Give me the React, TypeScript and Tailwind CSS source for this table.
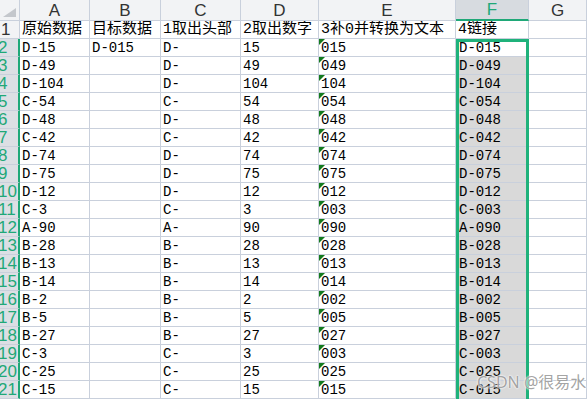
import React from "react";

const rows: string[][] = [
  ["D-15", "D-015", "D-", "15", "015", "D-015"],
  ["D-49", "", "D-", "49", "049", "D-049"],
  ["D-104", "", "D-", "104", "104", "D-104"],
  ["C-54", "", "C-", "54", "054", "C-054"],
  ["D-48", "", "D-", "48", "048", "D-048"],
  ["C-42", "", "C-", "42", "042", "C-042"],
  ["D-74", "", "D-", "74", "074", "D-074"],
  ["D-75", "", "D-", "75", "075", "D-075"],
  ["D-12", "", "D-", "12", "012", "D-012"],
  ["C-3", "", "C-", "3", "003", "C-003"],
  ["A-90", "", "A-", "90", "090", "A-090"],
  ["B-28", "", "B-", "28", "028", "B-028"],
  ["B-13", "", "B-", "13", "013", "B-013"],
  ["B-14", "", "B-", "14", "014", "B-014"],
  ["B-2", "", "B-", "2", "002", "B-002"],
  ["B-5", "", "B-", "5", "005", "B-005"],
  ["B-27", "", "B-", "27", "027", "B-027"],
  ["C-3", "", "C-", "3", "003", "C-003"],
  ["C-25", "", "C-", "25", "025", "C-025"],
  ["C-15", "", "C-", "15", "015", "C-015"],
];

const titles = ["原始数据", "目标数据", "1取出头部", "2取出数字", "3补0并转换为文本", "4链接"];
const letters = ["A", "B", "C", "D", "E", "F", "G"];

const cell = "border-r border-b border-[#c9d0dc] overflow-hidden whitespace-nowrap flex items-center pl-[2px] pt-[1px] text-black";

const App = () => {
  return (
    <div
      className="relative w-[587px] h-[399px] overflow-hidden bg-white text-[14px]"
      style={{ fontFamily: '"Liberation Mono", "Noto Sans CJK SC", monospace' }}
    >
      <div className="grid grid-cols-[20px_70px_71px_80px_78px_137px_73px_1fr] grid-rows-[21px_repeat(21,18px)]">
        {/* corner */}
        <div className="relative bg-[#f2f3f5] border-r border-b border-[#c9d0dc]">
          <div className="absolute right-[3px] bottom-[3px] w-0 h-0 border-b-[9px] border-l-[13px] border-b-[#c4c7cc] border-l-transparent" />
        </div>
        {letters.map((l) => (
          <div
            key={l}
            className={
              l === "F"
                ? "flex items-center justify-center pt-[1px] bg-[#d7dbe0] border-r border-[#c9d0dc] border-b-2 border-b-[#1fa878] text-[#1fa878] text-[17px] font-['Liberation_Sans',sans-serif]"
                : "flex items-center justify-center pt-[1px] bg-[#f2f3f5] border-r border-b border-[#c9d0dc] text-[#333] text-[17px] font-['Liberation_Sans',sans-serif]"
            }
          >
            {l}
          </div>
        ))}

        {/* row 1 */}
        <div className="bg-[#f2f3f5] border-r border-b border-[#c9d0dc] overflow-hidden text-[17px] leading-none flex items-center text-[#333] font-['Liberation_Sans',sans-serif]">
          <span className="ml-[1px]">1</span>
        </div>
        {titles.map((t, i) => (
          <div key={i} className={`${cell} text-[15px]`}>
            {t}
          </div>
        ))}
        <div className={cell} />

        {rows.map((r, i) => (
          <React.Fragment key={i}>
            <div className="bg-[#dcdfe4] border-r-2 border-r-[#1fa878] border-b border-b-[#c9d0dc] overflow-hidden text-[17px] leading-none flex items-center text-[#1fa878] font-['Liberation_Sans',sans-serif]">
              <span className="ml-[-2px]">{i + 2}</span>
            </div>
            <div className={cell}>{r[0]}</div>
            <div className={cell}>{r[1]}</div>
            <div className={cell}>{r[2]}</div>
            <div className={cell}>{r[3]}</div>
            <div className={`relative ${cell}`}>
              <span className="absolute left-0 top-0 w-0 h-0 border-t-[6px] border-r-[6px] border-t-[#137a1e] border-r-transparent" />
              {r[4]}
            </div>
            <div className={`${cell} ${i === 0 ? "bg-white" : "bg-[#d9d9d9]"} pl-[3px]`}>{r[5]}</div>
            <div className={cell} />
          </React.Fragment>
        ))}
      </div>

      {/* selection outline */}
      <div className="absolute left-[456px] top-[39px] w-[73px] h-[370px] border-[3px] border-[#1fb27b] pointer-events-none" />

      {/* watermark */}
      <span
        className="absolute left-[477px] top-[370px] whitespace-nowrap text-[16px] text-[#8c8c8c]/80 pointer-events-none"
        style={{
          fontFamily: '"Noto Sans", "Noto Sans CJK SC", sans-serif',
          textShadow: "0 0 2px #fff, 0 0 2px #fff",
        }}
      >
        CSDN @很易水
      </span>
    </div>
  );
};

export default App;
